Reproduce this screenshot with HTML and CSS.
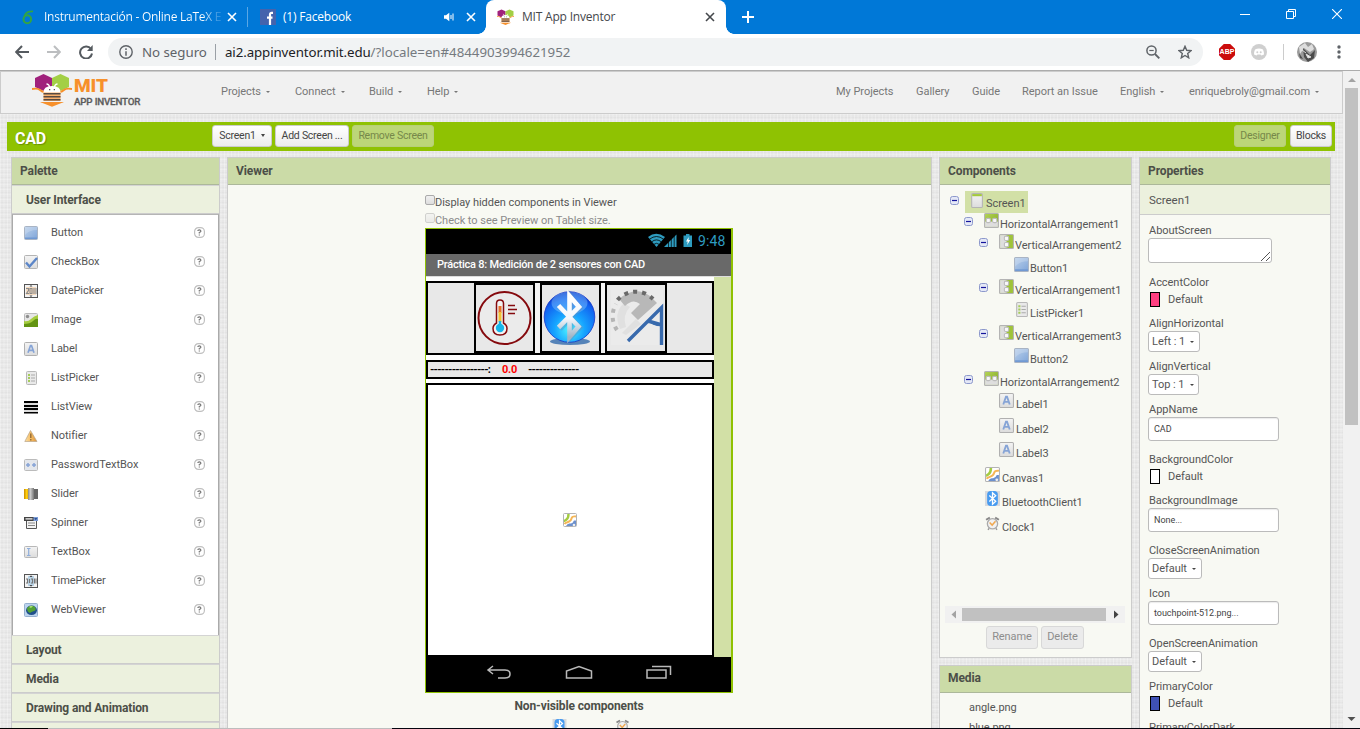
FILE: index.html
```html
<!DOCTYPE html>
<html lang="en">
<head>
<meta charset="utf-8">
<title>MIT App Inventor</title>
<link rel="stylesheet" href="styles.css">
</head>
<body>
<svg class="defs" width="0" height="0">
  <defs>
    <linearGradient id="gBlue" x1="0" y1="0" x2="1" y2="1"><stop offset="0" stop-color="#b9cfea"/><stop offset=".5" stop-color="#9dbbe2"/><stop offset="1" stop-color="#7ea4d8"/></linearGradient>
    <linearGradient id="gGrey" x1="0" y1="0" x2="0" y2="1"><stop offset="0" stop-color="#f4f4f4"/><stop offset="1" stop-color="#dcdcdc"/></linearGradient>
    <linearGradient id="gGreen" x1="0" y1="0" x2="1" y2="1"><stop offset="0" stop-color="#b5d458"/><stop offset="1" stop-color="#7fa81c"/></linearGradient>
    <linearGradient id="gKnob"><stop offset="0" stop-color="#888"/><stop offset=".4" stop-color="#ccc"/><stop offset="1" stop-color="#777"/></linearGradient>
    <linearGradient id="gGold"><stop offset="0" stop-color="#c98b00"/><stop offset=".5" stop-color="#ffcf10"/><stop offset="1" stop-color="#e0a200"/></linearGradient>
    <linearGradient id="gWarn"><stop offset="0" stop-color="#fbe0a8"/><stop offset=".5" stop-color="#f6bd62"/><stop offset="1" stop-color="#d9923e"/></linearGradient>
    <radialGradient id="gOrb" cx=".5" cy=".75" r=".75"><stop offset="0" stop-color="#4ff4ff"/><stop offset=".4" stop-color="#16a4ff"/><stop offset=".8" stop-color="#1263f0"/><stop offset="1" stop-color="#0a2fc4"/></radialGradient>
    <linearGradient id="gRune" x1="0" y1="0" x2="0" y2="1"><stop offset="0" stop-color="#fff"/><stop offset=".55" stop-color="#f2f6fb"/><stop offset="1" stop-color="#9fb4c6"/></linearGradient>
    <symbol id="i-button" viewBox="0 0 14 14"><rect x=".5" y=".5" width="13" height="13" rx="1" fill="url(#gBlue)" stroke="#a9b4c4"/><path d="M1 11.5h12v1.5H1z" fill="#6f98d2"/><path d="M1 1h12v3Q5 4 1 9z" fill="#fff" opacity=".2"/></symbol>
    <symbol id="i-check" viewBox="0 0 14 14"><rect x=".5" y=".5" width="13" height="13" rx="1" fill="url(#gGrey)" stroke="#b4b4b4"/><path d="M2 7.5 5.500 11.500 13 3" fill="none" stroke="#5c86c8" stroke-width="2.400"/></symbol>
    <symbol id="i-date" viewBox="0 0 14 14"><rect x=".5" y=".5" width="13" height="13" fill="#f3f3f3" stroke="#555"/><path d="M2 3h10v8H2z" fill="#f7dcc0"/><path d="M2 4.500h2.500v2l-2 3h2.500M6 4.500h2v5H6zM10 4v6M12 4v6" fill="none" stroke="#8a8a8a" stroke-width="1.100"/><path d="M5.500 2.500 7 1l1.500 1.500M5.500 11.500 7 13l1.500-1.500" fill="#444"/></symbol>
    <symbol id="i-time" viewBox="0 0 14 14"><rect x=".5" y=".5" width="13" height="13" fill="#f3f3f3" stroke="#555"/><path d="M4 2h6v10H4z" fill="#b9d3e6"/><path d="M2 5h1.500v4H2M5.500 5v4M7 5h1.500v4H7M10.500 4.500v5M12 4.500v5" fill="none" stroke="#777" stroke-width="1.100"/><path d="M5.500 3 7 1.300 8.500 3M5.500 11 7 12.700 8.500 11" fill="#444"/></symbol>
    <symbol id="i-image" viewBox="0 0 14 14"><rect x=".5" y=".5" width="13" height="13" rx="1" fill="#e6e6e6" stroke="#bbb"/><path d="M0 8Q4 9 7 6t7-4v11.500H0z" fill="#a5cc3f"/><path d="M0 11Q6 11 9 8t5-2v8H0z" fill="#639413"/><circle cx="3.500" cy="3.500" r="1.700" fill="#8e8e8e"/></symbol>
    <symbol id="i-label" viewBox="0 0 14 14"><rect x=".5" y=".5" width="13" height="13" rx="1" fill="url(#gGrey)" stroke="#b0b0b0"/><path d="M4 10.800 6.500 3.500h1l2.500 7.300M5 8.300h4" fill="none" stroke="#86a4d6" stroke-width="1.700"/></symbol>
    <symbol id="i-list" viewBox="0 0 14 14"><rect x="2.500" y=".5" width="10" height="13" rx="1" fill="#e9e9e9" stroke="#b8b8b8"/><path d="M4 3h2v2H4zM4 6h2v2H4zM4 9h2v2H4z" fill="#a5cc5a"/><path d="M7 4h4M7 7h4M7 10h4" stroke="#aaa"/></symbol>
    <symbol id="i-listview" viewBox="0 0 14 14"><path d="M0 1h14v12H0z" fill="#ddd"/><path d="M0 1h14v2H0zM0 5h14v2H0zM0 8h14v2H0zM0 12h14v1.500H0z" fill="#000"/></symbol>
    <symbol id="i-warn" viewBox="0 0 14 14"><path d="M6.500 1.500 13 12.500H.8z" fill="url(#gWarn)" stroke="#b9a58a" stroke-width=".7"/><path d="M6.800 4.500V9M6.800 10v1.600" stroke="#8d6532" stroke-width="1.300"/></symbol>
    <symbol id="i-pass" viewBox="0 0 14 14"><rect x=".5" y="1.500" width="13" height="11" rx="1" fill="#e4e7ec" stroke="#bbb"/><path d="M2 7h4M8 7h4M4 5v4M10 5v4" stroke="#86a4d6" stroke-width="1.500"/></symbol>
    <symbol id="i-slider" viewBox="0 0 14 14"><path d="M0 2h5v10H0z" fill="url(#gGold)"/><path d="M9 2h5v10H9z" fill="#666"/><rect x="4" y="1" width="6" height="12" fill="url(#gKnob)"/></symbol>
    <symbol id="i-spinner" viewBox="0 0 14 14"><path d="M0 1h14v4H0z" fill="#444"/><path d="M1.500 2.300h7v1.200h-7z" fill="#fff"/><path d="M9.500 1H14v4H9.500z" fill="#7a9cd8"/><path d="M10.300 2.200h3L11.800 4z" fill="#163a78"/><path d="M2.500 5v7.500h10V5" fill="#f4f4f4" stroke="#555"/><path d="M4 7h7M4 9.500h7" stroke="#888"/></symbol>
    <symbol id="i-textbox" viewBox="0 0 14 14"><rect x=".5" y="1.500" width="13" height="11" rx="1" fill="url(#gGrey)" stroke="#b8b8b8"/><path d="M3 3.500h3.500M3 10.500h3.500M4.700 3.500v7" stroke="#8faedb" stroke-width="1.200"/></symbol>
    <symbol id="i-web" viewBox="0 0 14 14"><rect x=".5" y=".5" width="13" height="13" rx="1" fill="#bcd4ee" stroke="#96b0cf"/><ellipse cx="7.500" cy="7.300" rx="5.500" ry="4.800" fill="#20508c"/><path d="M3 5Q7 1 11 4q2 3-1 4T6 10Q3 9 3 5z" fill="#52a234"/><path d="M5 4q2-2 4-1L7 5z" fill="#a9df72"/></symbol>
    <symbol id="i-screen" viewBox="0 0 14 14"><rect x="2.500" y=".5" width="10" height="13" rx="1" fill="url(#gGrey)" stroke="#b4b4b4"/><path d="M3 1h9v2H3z" fill="#a3c83c"/></symbol>
    <symbol id="i-harr" viewBox="0 0 14 14"><rect x=".5" y=".5" width="13" height="13" rx="1" fill="url(#gGreen)" stroke="#b4b4b4"/><path d="M1 8h12v5H1z" fill="#dedede"/><rect x="2" y="5" width="4" height="4" rx="1.200" fill="#f8f8f8" stroke="#bbb"/><rect x="8" y="5" width="4" height="4" rx="1.200" fill="#f8f8f8" stroke="#bbb"/></symbol>
    <symbol id="i-varr" viewBox="0 0 14 14"><rect x=".5" y=".5" width="13" height="13" rx="1" fill="#9fc33a" stroke="#b4b4b4"/><path d="M1 1h6v12H1z" fill="#dedede"/><rect x="5" y="2" width="4" height="4" rx="1.200" fill="#f8f8f8" stroke="#bbb"/><rect x="5" y="8" width="4" height="4" rx="1.200" fill="#f8f8f8" stroke="#bbb"/></symbol>
    <symbol id="i-canvas" viewBox="0 0 14 14"><rect x=".5" y=".5" width="13" height="13" rx="1" fill="#fff" stroke="#b4b4b4"/><path d="M5.500 1q0 4-2 5.500T1 8" fill="none" stroke="#a4cc40" stroke-width="2.400"/><path d="M13 3.500Q9 3 8.500 5.500T5 9 1.500 11" fill="none" stroke="#f5b656" stroke-width="1.900"/><path d="M3 13q1.500-3 4-2.500t4-3h2V13z" fill="#6d90cc"/><circle cx="11" cy="12" r="1.300" fill="#eee"/></symbol>
    <symbol id="i-bt" viewBox="0 0 14 14"><path d="M0 0h14v14H0z" fill="#d8dadd"/><rect x="2" y="0" width="10" height="14" rx="3.500" fill="#479bf0"/><path d="m4 4.300 6 5.200-3 2.800V1.700l3 2.800-6 5.200" fill="none" stroke="#fff" stroke-width="1.200"/></symbol>
    <symbol id="i-clock" viewBox="0 0 14 14"><path d="m1 3.500 3.500-2M13 3.500l-3.500-2" stroke="#888" stroke-width="1.800"/><circle cx="7" cy="7.300" r="4.800" fill="#f1f1f1" stroke="#aaa" stroke-width="1.200"/><path d="M4.300 6 6.700 8.500 9.800 5" fill="none" stroke="#efa850" stroke-width="1.400"/><path d="m3.700 11.500-.8 1.500M10.300 11.500l.8 1.500" stroke="#999" stroke-width="1.400"/></symbol>
    <symbol id="i-help" viewBox="0 0 11 11"><rect x=".6" y=".6" width="9.800" height="9.800" rx="3.800" fill="#fff" stroke="#c0c0c0" stroke-width="1.200"/><path d="M3.800 4Q3.900 2.900 5.300 2.900T6.900 4.100Q6.800 4.900 5.300 5.500V6.500" fill="none" stroke="#777" stroke-width="1.200"/><path d="M4.700 7.400h1.200v1.100H4.700z" fill="#777"/></symbol>
    <symbol id="i-minus" viewBox="0 0 9 9"><rect x=".5" y=".5" width="8" height="8" rx="2" fill="#e4e8f6" stroke="#8d99cc"/><path d="M2 4.500h5" stroke="#15159c" stroke-width="1.200"/></symbol>
    <symbol id="i-bee" viewBox="0 0 40 34"><path d="M3 5 11.500 1 20 5v9l-8.500 4L3 14z" fill="#a0217c"/><path d="M20 5 28.500 1 37 5v9l-8.500 4-8.500-4z" fill="#a3cf45"/><path d="M0 16q6-1 8 1t5 2M40 16q-6-1-8 1t-5 2" fill="none" stroke="#f7902b" stroke-width="1.800"/><path d="M11.500 20Q11 13 20 13t8.500 7z" fill="#fff"/><path d="M14.500 11q2.500 0 3 3M25.500 11q-2.500 0-3 3" fill="none" stroke="#fff" stroke-width="1.300"/><path d="M17 16h1.300v1.300H17zM21.700 16H23v1.300h-1.300z" fill="#555"/><path d="M11.500 19.500h17V28h-17z" fill="#f9b06d"/><path d="M11.500 20h17v1.600h-17zM11.500 23h17v1.600h-17zM11.500 26h17v1.500h-17z" fill="#584a43"/><path d="M8 29h24l-12 4.800zM12 27.500l-3 2.500M28 27.500l3 2.500" fill="#f7902b"/></symbol>
    <symbol id="i-x" viewBox="0 0 10 10"><path d="m1 1 8 8M9 1 1 9" fill="none" stroke="currentColor" stroke-width="1.600"/></symbol>
  </defs>
</svg>

<div class="tabs">
  <div class="tab tab-one">
    <svg width="14" height="16" viewBox="0 0 14 16"><path d="M12 2.300Q5 2 3.500 7" fill="none" stroke="#33a541" stroke-width="1.800"/><ellipse cx="6.300" cy="10.200" rx="3.800" ry="4" fill="none" stroke="#33a541" stroke-width="2"/></svg>
    <span class="tab-text tab-fade">Instrumentación - Online LaTeX E</span>
    <svg class="x" width="10" height="10"><use href="#i-x"/></svg>
  </div>
  <div class="tab tab-two">
    <svg width="16" height="16"><path d="M0 0h16v16H0z" fill="#4463ad"/><path d="M13 3.800h-1.200Q10 3.700 10 5.500V16M7 8.700h5.500" fill="none" stroke="#fff" stroke-width="2.200"/></svg>
    <span class="tab-text">(1) Facebook</span>
    <svg class="sound" width="11" height="10"><path d="M0 3.300h2L5.300.8v8.400L2 6.700H0z" fill="#fff"/><path d="M7 3v4M9 1.500v7" stroke="#fff"/></svg>
    <svg class="x" width="10" height="10"><use href="#i-x"/></svg>
  </div>
  <div class="tab tab-active">
    <svg width="17" height="16" viewBox="2 0 36 34"><use href="#i-bee" width="40" height="34"/></svg>
    <span class="tab-text">MIT App Inventor</span>
    <svg class="x" width="10" height="10"><use href="#i-x"/></svg>
  </div>
  <svg class="plus" width="12" height="12"><path d="M6 0v12M0 6h12" stroke="#fff" stroke-width="2"/></svg>
  <div class="win">
    <svg width="10" height="10"><path d="M0 5.500h10" stroke="#fff"/></svg>
    <svg width="10" height="10"><path d="M.5 2.500h7v7h-7zM2.500 2.500v-2h7v7h-2" fill="none" stroke="#fff"/></svg>
    <svg width="10" height="10"><path d="m0 0 10 10M10 0 0 10" stroke="#fff" stroke-width="1.100"/></svg>
  </div>
</div>

<div class="toolbar">
  <svg class="nav-ic" width="14" height="14"><path d="M14 7H1.500M7 1 1.200 7 7 13" fill="none" stroke="#555a5f" stroke-width="2"/></svg>
  <svg class="nav-ic" width="14" height="14"><path d="M0 7h12.500M7 1l5.800 6L7 13" fill="none" stroke="#bcbec0" stroke-width="2"/></svg>
  <svg class="nav-ic" width="14" height="14"><path d="M12 4A6 6 0 1 0 13 8.500" fill="none" stroke="#555a5f" stroke-width="2"/><path d="M13.700 0v6H8z" fill="#555a5f"/></svg>
  <div class="omni">
    <svg width="14" height="14"><circle cx="7" cy="7" r="6.200" fill="none" stroke="#5f6368" stroke-width="1.400"/><path d="M7 3.300v1.600M7 6.200v4.500" stroke="#5f6368" stroke-width="1.500"/></svg>
    <span class="insecure">No seguro</span><i class="vbar"></i>
    <span class="url"><b>ai2.appinventor.mit.edu</b>/?locale=en#4844903994621952</span>
    <svg class="mag" width="14" height="14"><circle cx="5.500" cy="5.500" r="4.600" fill="none" stroke="#5f6368" stroke-width="1.500"/><path d="m9 9 4.300 4.300" stroke="#5f6368" stroke-width="1.900"/><path d="M3.300 5.500h4.400" stroke="#5f6368" stroke-width="1.200"/></svg>
    <svg class="star" width="14" height="14"><path d="m7 1.300 1.700 4 4.300.4-3.300 2.800 1 4.300L7 10.500l-3.700 2.300 1-4.300L1 5.700l4.300-.4z" fill="none" stroke="#5f6368" stroke-width="1.400"/></svg>
  </div>
  <div class="abp">ABP</div>
  <svg class="discord" width="16" height="16"><circle cx="8" cy="8" r="8" fill="#cfcfcf"/><path d="M4 5.500Q8 3.500 12 5.500q1.300 3 1 5l-2.500 1-1-1h-3l-1 1L3 10.500q-.3-2 1-5z" fill="#fff"/><circle cx="6.300" cy="8.300" r="1" fill="#cfcfcf"/><circle cx="9.700" cy="8.300" r="1" fill="#cfcfcf"/></svg>
  <i class="ext-sep"></i>
  <svg class="avatar" width="20" height="20"><circle cx="10" cy="10" r="10" fill="#9a9a9a"/><path d="M2 5 8 1l3 4 4-3 2 5-4 3-6-4-4 6z" fill="#ddd"/><path d="m6 6 7 7 5-5-1 8-6 4-4-5zM2 11l4 6-3-1z" fill="#4b4b4b"/><path d="m9 12 5 3-3 1zM5 8l4 3M12 6l4 2" fill="#eee" stroke="#ddd"/></svg>
  <svg class="dots" width="4" height="14"><circle cx="2" cy="2" r="1.700" fill="#5f6368"/><circle cx="2" cy="7" r="1.700" fill="#5f6368"/><circle cx="2" cy="12" r="1.700" fill="#5f6368"/></svg>
</div>

<div class="page">
  <div class="main">
    <header class="top">
      <svg class="bee" width="40" height="34"><use href="#i-bee"/></svg>
      <div class="brand"><span class="mit">MIT</span><span class="inv">APP INVENTOR</span></div>
      <nav class="menu"><span class="dd m1">Projects</span><span class="dd m2">Connect</span><span class="dd m3">Build</span><span class="dd m4">Help</span></nav>
      <nav class="links"><span class="l1">My Projects</span><span class="l2">Gallery</span><span class="l3">Guide</span><span class="l4">Report an Issue</span><span class="dd l5">English</span><span class="dd l6">enriquebroly@gmail.com</span></nav>
    </header>

    <div class="green">
      <div class="project">CAD</div>
      <div class="btn b-s1">Screen1<i class="tri"></i></div>
      <div class="btn b-add">Add Screen ...</div>
      <div class="btn dim b-rem">Remove Screen</div>
      <div class="btn dim b-des">Designer</div>
      <div class="btn b-blk">Blocks</div>
    </div>

    <div class="cols">
      <section class="panel palette">
        <h2>Palette</h2>
        <h3>User Interface</h3>
        <div class="items">
          <div class="item"><svg><use href="#i-button"/></svg><span>Button</span><svg class="q"><use href="#i-help"/></svg></div>
          <div class="item"><svg><use href="#i-check"/></svg><span>CheckBox</span><svg class="q"><use href="#i-help"/></svg></div>
          <div class="item"><svg><use href="#i-date"/></svg><span>DatePicker</span><svg class="q"><use href="#i-help"/></svg></div>
          <div class="item"><svg><use href="#i-image"/></svg><span>Image</span><svg class="q"><use href="#i-help"/></svg></div>
          <div class="item"><svg><use href="#i-label"/></svg><span>Label</span><svg class="q"><use href="#i-help"/></svg></div>
          <div class="item"><svg><use href="#i-list"/></svg><span>ListPicker</span><svg class="q"><use href="#i-help"/></svg></div>
          <div class="item"><svg><use href="#i-listview"/></svg><span>ListView</span><svg class="q"><use href="#i-help"/></svg></div>
          <div class="item"><svg><use href="#i-warn"/></svg><span>Notifier</span><svg class="q"><use href="#i-help"/></svg></div>
          <div class="item"><svg><use href="#i-pass"/></svg><span>PasswordTextBox</span><svg class="q"><use href="#i-help"/></svg></div>
          <div class="item"><svg><use href="#i-slider"/></svg><span>Slider</span><svg class="q"><use href="#i-help"/></svg></div>
          <div class="item"><svg><use href="#i-spinner"/></svg><span>Spinner</span><svg class="q"><use href="#i-help"/></svg></div>
          <div class="item"><svg><use href="#i-textbox"/></svg><span>TextBox</span><svg class="q"><use href="#i-help"/></svg></div>
          <div class="item"><svg><use href="#i-time"/></svg><span>TimePicker</span><svg class="q"><use href="#i-help"/></svg></div>
          <div class="item"><svg><use href="#i-web"/></svg><span>WebViewer</span><svg class="q"><use href="#i-help"/></svg></div>
        </div>
        <h3>Layout</h3><h3>Media</h3><h3>Drawing and Animation</h3><h3></h3>
      </section>

      <section class="panel viewer">
        <h2>Viewer</h2>
        <div class="view-body">
          <div class="chk"><i class="box"></i><span>Display hidden components in Viewer</span></div>
          <div class="chk off"><i class="box"></i><span>Check to see Preview on Tablet size.</span></div>
          <div class="phone">
            <div class="status">
              <svg width="44" height="15"><path d="M0 4Q8-2.500 17 4L8.500 14z" fill="#2e9cc0"/><path d="M1.500 6.200q7-5.400 14 0M3.700 8.800q4.800-3.800 9.600 0M6 11.300q2.500-2 5 0" fill="none" stroke="#000" stroke-width=".8"/><path d="M16 14 28.500 1.500V14z" fill="#2e9cc0"/><path d="M20.500 8v6M23.300 5v9M26.200 2v12" stroke="#000" stroke-width=".7"/><path d="M35.500 2.500h2.500V1h3.500v1.500H44V14h-8.500z" fill="#2e9cc0"/><path d="m40.700 4-2.700 4.500h1.700l-.5 3.500 3-5h-1.700z" fill="#fff"/></svg>
              <span>9:48</span>
            </div>
            <div class="ptitle">Práctica 8: Medición de 2 sensores con CAD</div>
            <div class="form">
              <div class="content">
                <div class="harr">
                  <div class="cell"><svg width="57" height="58" viewBox="0 0 57 58"><circle cx="28.500" cy="29" r="26" fill="#ebebeb" stroke="#85090d" stroke-width="2"/><path d="M20.500 34V14.500Q20.500 11 24 11t3.500 3.500V34Q31 36 31 39.500 31 46 24 46t-7-6.500Q17 36 20.500 34z" fill="#f2f2f2" stroke="#85090d" stroke-width="1.500"/><path d="M24 17v7" stroke="#e8702a" stroke-width="3"/><path d="M24 23v10" stroke="#f1c232" stroke-width="3"/><circle cx="24" cy="39" r="4.200" fill="#16b5ea"/><path d="M24 32v5" stroke="#16b5ea" stroke-width="2.500"/><path d="M32 16.500h7M32 20.500h9M32 24.500h7" stroke="#85090d" stroke-width="1.500"/></svg></div>
                  <div class="cell"><svg width="57" height="58" viewBox="0 0 57 58"><ellipse cx="28" cy="52.500" rx="20" ry="3.500" fill="#5583b8"/><circle cx="27.500" cy="28" r="25.300" fill="url(#gOrb)" stroke="#1436c8" stroke-width=".8"/><ellipse cx="27.500" cy="14" rx="18" ry="11" fill="#8fd0ff" opacity=".4"/><path d="m17 17 20 20.500L28 47V7l9 11L17 39" fill="none" stroke="#6c8db4" stroke-width="5" opacity=".4" transform="translate(1 1)"/><path d="m16.500 16.500 20 21L27.500 48V7L37 18 16.500 38.500" fill="none" stroke="url(#gRune)" stroke-width="4.600"/></svg></div>
                  <div class="cell c3"><svg width="57" height="58" viewBox="0 0 57 58"><path d="M3 1h52v55H3z" fill="#ebebeb"/><path d="M12 40Q5 24 16 14l6 4q-8 8-4 20z" fill="#e0e0e0"/><path d="M14 44 28 30l5 5-15 11z" fill="#e0e0e0"/><path d="M11 10Q27-4 42 7l7 7-19 17-7-7 9-9Q25 9 17 17z" fill="#b8b8b8"/><path d="M9 41A24 24 0 0 1 8 15" fill="none" stroke="#b5b5b5" stroke-width="4" stroke-dasharray="4 5"/><path d="M9.500 11A24 24 0 0 1 45 10" fill="none" stroke="#696969" stroke-width="4" stroke-dasharray="4 5"/><path d="M20 52 53.500 18.500V56M40 32l14 4" fill="none" stroke="#386aad" stroke-width="3.400"/><path d="M41 31q4 5 12 5" fill="none" stroke="#386aad" stroke-width="2.500"/></svg></div>
                </div>
                <div class="labels"><span class="t1">----------------:</span><span class="t2">0.0</span><span class="t3">--------------</span></div>
                <div class="canvas"><svg width="14" height="14"><use href="#i-canvas"/></svg></div>
              </div>
            </div>
            <div class="pnav">
              <svg width="26" height="14"><path d="M7 1 2 5l5 4M2 5h17q5 0 5 4t-5 4h-7" fill="none" stroke="#b9b9b9" stroke-width="1.500"/></svg>
              <svg width="28" height="14"><path d="M1.500 13V6L14 1.500 26.500 6v7z" fill="none" stroke="#b9b9b9" stroke-width="1.500"/></svg>
              <svg width="26" height="14"><path d="M1 5h19v8H1zM6 1.500h18.500V10" fill="none" stroke="#b9b9b9" stroke-width="1.500"/></svg>
            </div>
          </div>
          <div class="nonvis">Non-visible components</div>
          <div class="nv-icons"><svg width="15" height="14"><use href="#i-bt"/></svg><svg width="15" height="14"><use href="#i-clock"/></svg></div>
        </div>
      </section>

      <div class="stack">
        <section class="panel comps">
          <h2>Components</h2>
          <div class="tree">
            <div class="node n0"><svg class="tg"><use href="#i-minus"/></svg><span class="sel"><svg class="ic"><use href="#i-screen"/></svg><span>Screen1</span></span></div>
            <div class="node d1 h19"><svg class="tg"><use href="#i-minus"/></svg><svg class="ic"><use href="#i-harr"/></svg><span>HorizontalArrangement1</span></div>
            <div class="node d2 h21"><svg class="tg"><use href="#i-minus"/></svg><svg class="ic"><use href="#i-varr"/></svg><span>VerticalArrangement2</span></div>
            <div class="node leaf3 h23"><svg class="ic"><use href="#i-button"/></svg><span>Button1</span></div>
            <div class="node d2 h22"><svg class="tg"><use href="#i-minus"/></svg><svg class="ic"><use href="#i-varr"/></svg><span>VerticalArrangement1</span></div>
            <div class="node leaf3 h23"><svg class="ic"><use href="#i-list"/></svg><span>ListPicker1</span></div>
            <div class="node d2 h23"><svg class="tg"><use href="#i-minus"/></svg><svg class="ic"><use href="#i-varr"/></svg><span>VerticalArrangement3</span></div>
            <div class="node leaf3 h23"><svg class="ic"><use href="#i-button"/></svg><span>Button2</span></div>
            <div class="node d1 h23"><svg class="tg"><use href="#i-minus"/></svg><svg class="ic"><use href="#i-harr"/></svg><span>HorizontalArrangement2</span></div>
            <div class="node leaf2 h22"><svg class="ic"><use href="#i-label"/></svg><span>Label1</span></div>
            <div class="node leaf2 h25"><svg class="ic"><use href="#i-label"/></svg><span>Label2</span></div>
            <div class="node leaf2 h24"><svg class="ic"><use href="#i-label"/></svg><span>Label3</span></div>
            <div class="node leaf1 h25"><svg class="ic"><use href="#i-canvas"/></svg><span>Canvas1</span></div>
            <div class="node leaf1 h24"><svg class="ic"><use href="#i-bt"/></svg><span>BluetoothClient1</span></div>
            <div class="node leaf1 h25"><svg class="ic"><use href="#i-clock"/></svg><span>Clock1</span></div>
          </div>
          <div class="hscroll"><svg width="17" height="17"><path d="M11 4.500v8l-4.500-4z" fill="#a3a3a3"/></svg><i></i><svg width="17" height="17"><path d="M6 4.500v8l4.500-4z" fill="#444"/></svg></div>
          <div class="acts"><div class="btn grey b-ren">Rename</div><div class="btn grey b-del">Delete</div></div>
        </section>
        <section class="panel media">
          <h2>Media</h2>
          <div class="file">angle.png</div><div class="file">blue.png</div>
        </section>
      </div>

      <section class="panel props">
        <h2>Properties</h2>
        <div class="who">Screen1</div>
        <div class="fields">
          <div class="lab">AboutScreen</div><div class="area"><svg width="9" height="9"><path d="M0 9 9 0M5 9l4-4" stroke="#555" stroke-width="1"/></svg></div>
          <div class="lab">AccentColor</div><div class="color"><i class="sw pink"></i>Default</div>
          <div class="lab">AlignHorizontal</div><div class="drop w52">Left : 1<i class="tri"></i></div>
          <div class="lab">AlignVertical</div><div class="drop w51">Top : 1<i class="tri"></i></div>
          <div class="lab">AppName</div><div class="inp">CAD</div>
          <div class="lab">BackgroundColor</div><div class="color"><i class="sw white"></i>Default</div>
          <div class="lab">BackgroundImage</div><div class="inp">None...</div>
          <div class="lab">CloseScreenAnimation</div><div class="drop w54">Default<i class="tri"></i></div>
          <div class="lab">Icon</div><div class="inp">touchpoint-512.png...</div>
          <div class="lab">OpenScreenAnimation</div><div class="drop w54">Default<i class="tri"></i></div>
          <div class="lab">PrimaryColor</div><div class="color"><i class="sw indigo"></i>Default</div>
          <div class="lab">PrimaryColorDark</div>
        </div>
      </section>
    </div>
  </div>
  <div class="vscroll"><svg width="17" height="17"><path d="M5 11h8L9 7z" fill="#a3a3a3"/></svg><i></i><svg class="down" width="17" height="17"><path d="M4.500 6h8l-4 4z" fill="#505050"/></svg></div>
</div>
<div class="taskline"><i class="k1"></i><i class="k2"></i><i class="k3"></i></div>
</body>
</html>
```

FILE: styles.css
```css
* { box-sizing: border-box; }
body { margin: 0; width: 1360px; height: 729px; overflow: hidden; display: flex; flex-direction: column; font: 11px/16px Roboto, sans-serif; letter-spacing: -.04px; color: #555; white-space: nowrap; background: #fff; }
svg { display: block; flex: none; }
i { display: block; flex: none; }
.defs { position: absolute; }

/* browser tabs */
.tabs { height: 34px; flex: none; background: #0078d7; display: flex; align-items: center; font: 12px/16px "Open Sans", sans-serif; letter-spacing: -.2px; color: #fff; }
.tab { display: flex; align-items: center; height: 34px; flex: none; }
.tab-one { width: 247px; padding-left: 21px; }
.tab-one .tab-text { margin-left: 9px; width: 178px; letter-spacing: -.26px; }
.tab-fade { background: linear-gradient(90deg, #fff 158px, rgba(255,255,255,.2) 174px); -webkit-background-clip: text; background-clip: text; color: transparent; }
.tab-one .x { margin-left: 5px; }
.tab-two { width: 238px; height: 20px; border-left: 1px solid #5aa7e5; padding-left: 12px; }
.tab-two .tab-text { margin-left: 7px; width: 161px; }
.tab-two .x { margin-left: 11px; }
.tab-active { position: relative; width: 240px; height: 34px; background: #fff; color: #45484c; border-radius: 8px 8px 0 0; padding-left: 11px; margin-left: 1px; }
.tab-active::before, .tab-active::after { content: ""; position: absolute; bottom: 0; width: 8px; height: 8px; }
.tab-active::before { left: -8px; background: radial-gradient(circle at 0 0, transparent 7.500px, #fff 8px); }
.tab-active::after { right: -8px; background: radial-gradient(circle at 100% 0, transparent 7.500px, #fff 8px); }
.tab-active .tab-text { margin-left: 8px; width: 183px; }
.plus { margin-left: 16px; }
.win { margin-left: auto; display: flex; gap: 36px; padding-right: 18px; padding-bottom: 6px; }

/* browser toolbar */
.toolbar { height: 37px; flex: none; background: #fff; border-bottom: 1px solid #acacac; display: flex; align-items: center; padding-left: 15px; }
.nav-ic { margin-right: 18px; }
.omni { width: 1095px; height: 28px; border-radius: 14px; background: #f1f3f4; display: flex; align-items: center; padding-left: 11px; margin-left: -3px; font: 13.300px/20px "Noto Sans", sans-serif; letter-spacing: -.03px; color: #757a7f; flex: none; }
.insecure { margin-left: 9px; width: 65px; color: #5f6368; }
.vbar { width: 1px; height: 16px; background: #9aa0a6; margin: 0 9px 0 8px; }
.url { width: 350px; }
.url b { font-weight: 400; color: #202124; letter-spacing: -.1px; }
.mag { margin-left: 571px; }
.star { margin-left: 18px; }
.abp { width: 16px; height: 16px; margin-left: 16px; background: #cb0c0c; color: #fff; font: bold 7px/16px "Liberation Sans", sans-serif; letter-spacing: 0; text-align: center; clip-path: polygon(30% 0, 70% 0, 100% 30%, 100% 70%, 70% 100%, 30% 100%, 0 70%, 0 30%); }
.discord { margin-left: 16px; }
.ext-sep { width: 1px; height: 16px; background: #ccc; margin: 0 13px 0 16px; }
.dots { margin-left: 20px; }

/* page */
.page { height: 657px; flex: none; display: flex; overflow: hidden; }
.main { width: 1343px; height: 657px; overflow: hidden; background-color: #e7e7e7; background-image: repeating-linear-gradient(90deg, rgba(255,255,255,.3) 0 1px, transparent 1px 3px, rgba(255,255,255,.15) 3px 5px, transparent 5px 7px), repeating-linear-gradient(0deg, rgba(0,0,0,.02) 0 1px, transparent 1px 3px, rgba(255,255,255,.2) 3px 4px, transparent 4px 5px); }
.top { height: 43px; width: 1343px; border: 1px solid #ccc; background: #f1f1f1; display: flex; align-items: flex-start; color: #777; }
.bee { margin: 1px 0 0 31px; }
.brand { display: flex; flex-direction: column; margin: 4px 0 0 2px; width: 147px; }
.mit { font: 900 19px/20px Roboto, sans-serif; color: #f7902b; letter-spacing: -.1px; }
.inv { font: 500 9.800px/12px Roboto, sans-serif; color: #5c5c5c; letter-spacing: -.2px; -webkit-text-stroke: .3px #5c5c5c; }
.menu, .links { display: flex; padding-top: 12px; }
.menu span, .links span { flex: none; }
.m1 { width: 74px; } .m2 { width: 74px; } .m3 { width: 58px; } .m4 { width: 40px; }
.links { margin-left: auto; padding-right: 19px; }
.l1 { width: 80px; } .l2 { width: 56px; } .l3 { width: 50px; } .l4 { width: 98px; } .l5 { width: 69px; } .l6 { width: 134px; }
.dd::after { content: ""; display: inline-block; border: 2px solid transparent; border-top: 2.500px solid #777; border-bottom: 0; margin-left: 5px; vertical-align: 2.500px; }
.tri { width: 0; height: 0; border: 2px solid transparent; border-top: 3px solid #444; border-bottom: 0; margin-left: 5px; }

.green { margin: 8px 8px 0 7px; height: 29px; background: #8fc202; display: flex; align-items: flex-start; padding: 3px 3px 0 8px; }
.project { width: 197px; font: 700 16px/27px Roboto, sans-serif; color: #fff; text-shadow: 1px 1px 1px rgba(0,0,0,.25); letter-spacing: -.2px; }
.btn { height: 22px; border-radius: 3px; border: 1px solid #ccc; background: linear-gradient(#fff, #ececec); display: flex; align-items: center; justify-content: center; padding-bottom: 1px; color: #444; font-size: 10.500px; letter-spacing: -.25px; flex: none; }
.dim { background: #bcd678; border-color: #b7cf78; color: #76884a; }
.b-s1 { width: 60px; margin-right: 3px; } .b-add { width: 74px; margin-right: 3px; } .b-rem { width: 82px; margin-right: auto; }
.b-des { width: 52px; margin-right: 4px; } .b-blk { width: 42px; }

.cols { display: flex; align-items: flex-start; margin: 6px 0 0 11px; gap: 7px; }
.panel { border: 1px solid #ccc; background: #f8f9f3; flex: none; }
.panel h2 { margin: 0; height: 27px; background: #cbdba7; border-bottom: 1px solid #acb89a; font: 700 12px/27px Roboto, sans-serif; letter-spacing: -.1px; color: #4c4f48; padding-left: 8px; }
.palette { width: 209px; height: 600px; }
.palette h3 { margin: 0; height: 29px; border-bottom: 1px solid #ccc; border-top: 1px solid #d4d4d4; background: #ecf1de; font: 700 12px/28px Roboto, sans-serif; letter-spacing: -.13px; color: #4c4f48; padding-left: 14px; }
.items { height: 421px; border: 1px solid #aaa; border-top-color: #b5b5b5; border-bottom: 0; background: #fff; padding-top: 3px; }
.item { height: 29px; display: flex; align-items: center; padding: 0 13px 0 11px; }
.item svg { width: 14px; height: 14px; }
.item .q { width: 11px; height: 11px; margin-left: auto; }
.item span { margin: 0 0 0 13px; }

.viewer { width: 705px; height: 600px; }
.view-body { padding: 7px 0 0 197px; }
.chk { height: 18px; display: flex; align-items: center; color: #555; }
.chk span { padding-top: 3px; }
.off { color: #8b8b8b; }
.box { width: 10px; height: 10px; border: 1px solid #aaa; border-radius: 2px; background: linear-gradient(#f0f0f0, #ddd); margin: 0 0 2px; }
.off .box { opacity: .5; }
.phone { width: 308px; height: 465px; border: 1px solid #8fc202; border-right-width: 2px; display: flex; flex-direction: column; }
.status { height: 25px; background: #000; display: flex; align-items: center; padding: 0 6px 2px 222px; color: #2e9cc0; font: 14px/20px Roboto, sans-serif; flex: none; letter-spacing: .1px; }
.status span { margin-left: 6px; padding-top: 1px; }
.ptitle { height: 23px; background: #696969; border-bottom: 1px solid #ddd; color: #fff; font: 500 11px/22px Roboto, sans-serif; letter-spacing: -.22px; padding-left: 11px; flex: none; }
.form { height: 380px; background: #d2e0a6; flex: none; }
.content { width: 288px; height: 380px; background: #fff; padding-top: 4px; }
.harr { height: 74px; border: 2px solid #000; background: #e8e8e8; display: flex; padding-left: 46px; }
.cell { width: 61px; height: 70px; border: 2px solid #000; margin-right: 5px; display: flex; align-items: center; justify-content: center; background: #e8e8e8; box-shadow: 5px 0 0 #f4f4f4; }
.cell + .cell { margin-right: 4px; }
.cell.c3 { width: 62px; box-shadow: none; }
.labels { height: 19px; margin-top: 5px; border: 2px solid #000; background: #e8e8e8; display: flex; align-items: center; padding-left: 2px; color: #000; font-weight: 700; }
.t1 { width: 72px; letter-spacing: -.72px; } .t2 { width: 26px; color: #f00; letter-spacing: -.2px; } .t3 { letter-spacing: -.72px; }
.canvas { height: 274px; margin-top: 4px; border: 2px solid #000; background: #fff; display: flex; align-items: center; justify-content: center; }
.pnav { height: 35px; background: #000; display: flex; padding: 8px 0 0 60px; gap: 53px; flex: none; }
.nonvis { width: 308px; text-align: center; margin-top: 5px; font: 700 12px/16px Roboto, sans-serif; letter-spacing: -.13px; color: #4c4f48; }
.nv-icons { display: flex; gap: 48px; margin: 5px 0 0 127px; }

.stack { display: flex; flex-direction: column; gap: 7px; }
.comps { width: 193px; height: 501px; }
.tree { height: 421px; padding-top: 6px; }
.node { display: flex; align-items: flex-end; }
.node > span { flex: none; line-height: 14px; }
.node svg.ic { width: 15px; height: 15px; margin: 0 1px 4px 0; }
.node svg.tg { width: 9px; height: 9px; margin: 0 11px 6px 0; }
.n0 { height: 22px; padding-left: 10px; }
.node.n0 svg.tg { margin: 0 6px 8px 0; }
.sel { display: flex; align-items: flex-end; height: 22px; width: 63px; background: #d2e0a6; padding-left: 4px; padding-bottom: 1px; }
.sel > span { flex: none; line-height: 16px; }
.node .sel svg.ic { margin: 0 2px 4px 0; }
.d1 { padding-left: 24px; } .d2 { padding-left: 39px; }
.leaf3 { padding-left: 74px; } .leaf2 { padding-left: 59px; } .leaf1 { padding-left: 45px; }
.leaf2 > span, .leaf1 > span { margin-left: 1px; }
.h19 { height: 19px; } .h21 { height: 21px; } .h22 { height: 22px; } .h23 { height: 23px; } .h24 { height: 24px; } .h25 { height: 25px; }
.hscroll { width: 180px; height: 17px; margin-left: 5px; background: #f1f1f1; display: flex; align-items: center; }
.hscroll i { width: 144px; height: 13px; background: #c1c1c1; margin-right: 2px; }
.acts { display: flex; gap: 3px; margin: 3px 0 0 46px; }
.grey { height: 23px; background: #ebebeb; border-color: #d8d8d8; color: #8d8d8d; font-size: 11px; letter-spacing: -.08px; padding-bottom: 2px; }
.b-ren { width: 52px; } .b-del { width: 43px; }
.media { width: 193px; height: 100px; }
.panel.media h2 { line-height: 25px; }
.file { height: 20px; line-height: 20px; padding-left: 29px; }
.media h2 + .file { margin-top: 5px; }

.props { width: 192px; height: 600px; }
.who { height: 30px; border-bottom: 1px solid #ccc; background: #ecf1de; line-height: 30px; padding-left: 9px; font-size: 11.500px; }
.fields { padding: 7px 0 0 8px; }
.lab { height: 16px; line-height: 18px; padding-left: 1px; }
.area { width: 124px; height: 25px; border: 1px solid #bbb; border-radius: 3px; background: #fff; margin-bottom: 11px; display: flex; align-items: flex-end; justify-content: flex-end; padding: 0 1px 1px 0; }
.color { height: 19px; display: flex; align-items: center; margin-bottom: 6px; }
.sw { width: 10px; height: 15px; border: 1px solid #000; margin: 0 8px 0 2px; }
.pink { background: #ff4081; } .white { background: #fff; } .indigo { background: #3f51b5; }
.drop { height: 21px; border: 1px solid #bbb; border-radius: 3px; background: #fff; display: flex; align-items: center; padding-left: 3px; margin-bottom: 6px; }
.drop .tri { margin-left: 5px; border-top-width: 2.500px; }
.w52 { width: 52px; } .w51 { width: 51px; } .w54 { width: 54px; }
.inp { width: 131px; height: 24px; border: 1px solid #bbb; border-radius: 3px; background: #fff; box-shadow: inset 0 1px 1px rgba(0,0,0,.08); margin-bottom: 10px; font: 9px/22px Roboto, sans-serif; padding-left: 5px; color: #444; letter-spacing: -.03px; }

.vscroll { width: 17px; height: 657px; background: #f1f1f1; display: flex; flex-direction: column; flex: none; }
.vscroll i { width: 13px; height: 337px; background: #c1c1c1; margin-left: 2px; }
.vscroll .down { margin-top: auto; }
.taskline { height: 1px; display: flex; flex: none; }
.taskline i { height: 1px; }
.k1 { width: 48px; background: #000; } .k2 { width: 344px; background: #bdbdbd; } .k3 { width: 968px; background: #05050f; }
```
